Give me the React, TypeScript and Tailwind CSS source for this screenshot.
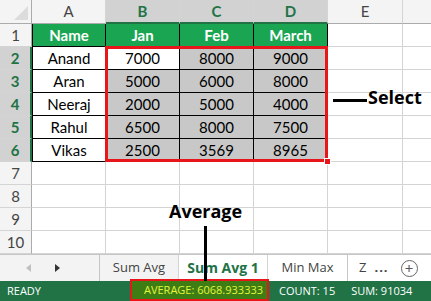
import React from "react";

const COLS = [74, 74, 74, 74, 75];
const data: string[][] = [
  ["Name", "Jan", "Feb", "March"],
  ["Anand", "7000", "8000", "9000"],
  ["Aran", "5000", "6000", "8000"],
  ["Neeraj", "2000", "5000", "4000"],
  ["Rahul", "6500", "8000", "7500"],
  ["Vikas", "2500", "3569", "8965"],
];

function ColHeader({ label, sel, w }: { label: string; sel: boolean; w: number }) {
  return (
    <div
      style={{ width: w }}
      className={
        "h-[24px] shrink-0 flex items-center justify-center border-r border-[#d4d4d4] " +
        (sel
          ? "bg-[#d2d2d2] text-[#217346] font-bold border-b-2 border-b-[#217346]"
          : "bg-[#f4f4f4] text-[#444] border-b border-b-[#ababab]")
      }
    >
      {label}
    </div>
  );
}

export default function App() {
  const rows = Array.from({ length: 10 }, (_, i) => i + 1);
  return (
    <div className="relative w-[431px] h-[301px] overflow-hidden bg-white font-['Lato',sans-serif] text-[15px] text-black select-none">
      {/* Column header row */}
      <div className="flex">
        <div className="w-[32px] h-[24px] shrink-0 bg-[#f4f4f4] border-r border-b border-[#ababab] relative">
          <div className="absolute right-[3px] bottom-[3px] w-0 h-0 border-l-[14px] border-l-transparent border-b-[14px] border-b-[#dcdcdc]" />
        </div>
        <ColHeader label="A" sel={false} w={74} />
        <ColHeader label="B" sel w={74} />
        <ColHeader label="C" sel w={74} />
        <ColHeader label="D" sel w={74} />
        <ColHeader label="E" sel={false} w={75} />
        <div className="h-[24px] flex-1 bg-[#f4f4f4] border-b border-[#ababab]" />
      </div>
      {rows.map((r) => {
        const selRow = r >= 2 && r <= 6;
        return (
          <div key={r} className="flex h-[23px]">
            <div
              className={
                "w-[32px] shrink-0 flex items-center justify-center border-b border-[#d4d4d4] " +
                (selRow
                  ? "bg-[#d2d2d2] text-[#217346] font-bold border-r-2 border-r-[#217346]"
                  : "bg-[#f4f4f4] text-[#444] border-r border-r-[#ababab]")
              }
            >
              {r}
            </div>
            {COLS.map((w, c) => {
              const inTable = r <= 6 && c <= 3;
              const isHead = r === 1 && c <= 3;
              const isSel = r >= 2 && r <= 6 && c >= 1 && c <= 3 && !(r === 2 && c === 1);
              let cls = "shrink-0 flex items-center justify-center ";
              if (isHead) cls += "bg-[#19a552] text-white font-bold border-r border-b border-black ";
              else if (inTable)
                cls += (isSel ? "bg-[#c8c8c8] " : "bg-white ") + "border-r border-b border-black ";
              else cls += "border-r border-b border-[#d4d4d4] ";
              if (inTable && c === 0) cls += "border-l border-l-black ";
              return (
                <div key={c} style={{ width: w }} className={cls}>
                  {inTable ? data[r - 1][c] : ""}
                </div>
              );
            })}
            <div className="flex-1 border-b border-[#d4d4d4]" />
          </div>
        );
      })}

      {/* Selection box */}
      <div className="absolute left-[105px] top-[46px] w-[223px] h-[116px] border-[3px] border-[#e8161b]" />
      <div className="absolute left-[324px] top-[158px] w-[7px] h-[7px] bg-[#e8161b] border border-white" />

      {/* Select annotation */}
      <div className="absolute left-[333px] top-[99px] w-[34px] h-[3px] bg-black" />
      <div className="absolute left-[368px] top-[88px] text-[18px] font-bold leading-none font-['Open_Sans',sans-serif]">
        Select
      </div>

      {/* Tab bar */}
      <div className="absolute left-0 top-[254px] w-[431px] h-[27px] bg-[#f3f3f3] border-t border-[#c6c6c6] flex items-stretch text-[13px] font-['Open_Sans',sans-serif] text-[#444]">
        <div className="w-[100px] flex items-center border-r border-[#c6c6c6]">
          <span className="ml-[26px] w-0 h-0 border-y-[4px] border-y-transparent border-r-[5px] border-r-[#c0c0c0]" />
          <span className="ml-[24px] w-0 h-0 border-y-[4px] border-y-transparent border-l-[5px] border-l-[#333]" />
        </div>
        <div className="w-[78px] flex items-center justify-center">Sum Avg</div>
        <div className="w-[90px] flex items-center justify-center bg-white text-[#217346] text-[14px] font-bold border-b-2 border-[#217346] border-x border-x-[#d4d4d4]">
          Sum Avg 1
        </div>
        <div className="w-[80px] flex items-center justify-center bg-white border-r border-[#c6c6c6]">Min Max</div>
        <div className="flex-1 flex items-center bg-white pl-[11px] gap-[8px]">
          <span>Z</span>
          <span className="font-bold tracking-[1px]">...</span>
          <span className="ml-[4px] w-[17px] h-[17px] rounded-full border border-[#666] flex items-center justify-center text-[#555] text-[15px] leading-none">
            +
          </span>
        </div>
      </div>

      {/* Status bar */}
      <div className="absolute left-0 top-[281px] w-[431px] h-[20px] bg-[#217346] text-white text-[11px] font-['Open_Sans',sans-serif] flex items-center">
        <span className="ml-[7px] w-[123px]">READY</span>
        <div className="h-[22px] -mt-[2px] w-[139px] border-2 border-[#e8161b] bg-[#3e7d14] text-[#e4f53a] flex items-center justify-end pr-[4px]">
          AVERAGE: 6068.933333
        </div>
        <span className="ml-[10px]">COUNT: 15</span>
        <span className="ml-[16px]">SUM: 91034</span>
      </div>

      {/* Average annotation */}
      <div className="absolute left-[169px] top-[202px] text-[18px] font-bold leading-none font-['Open_Sans',sans-serif]">
        Average
      </div>
      <div className="absolute left-[204px] top-[226px] w-[3px] h-[55px] bg-black" />
    </div>
  );
}
